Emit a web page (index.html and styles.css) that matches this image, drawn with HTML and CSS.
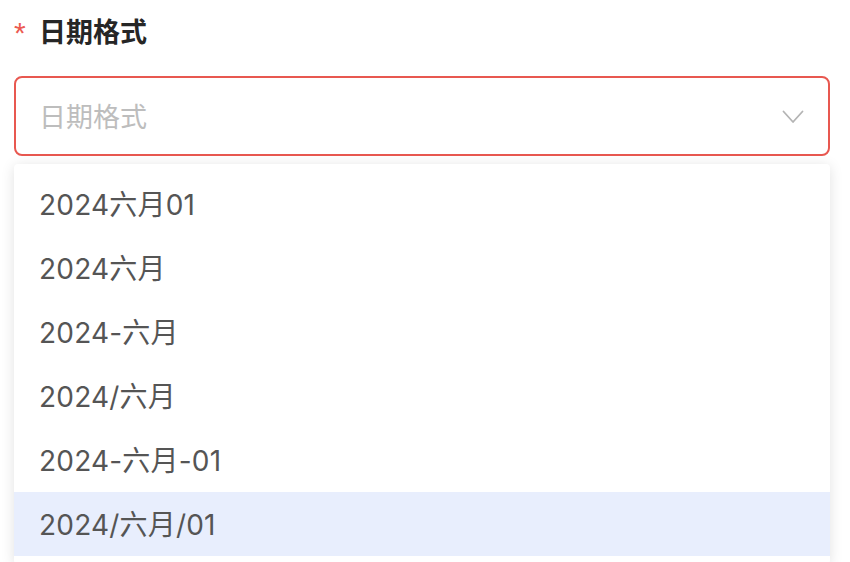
FILE: index.html
```html
<!DOCTYPE html>
<html lang="zh-CN">
<head>
<meta charset="utf-8">
<title>日期格式</title>
<link rel="stylesheet" href="styles.css">
</head>
<body>
<div class="field">
  <div class="label"><span class="star">*</span><span class="label-text">日期格式</span></div>
  <div class="select">
    <span class="placeholder">日期格式</span>
    <svg class="chevron" width="22" height="14" viewBox="0 0 22 14"><path d="M1.5 1.5 L11 12 L20.5 1.5" fill="none" stroke="#b4b4b4" stroke-width="1.8" stroke-linecap="round" stroke-linejoin="round"/></svg>
  </div>
  <ul class="dropdown">
    <li class="item">2024六月01</li>
    <li class="item">2024六月</li>
    <li class="item">2024-六月</li>
    <li class="item">2024/六月</li>
    <li class="item">2024-六月-01</li>
    <li class="item hover">2024/六月/01</li>
  </ul>
</div>
</body>
</html>
```
FILE: styles.css
```css
html, body {
  margin: 0;
  padding: 0;
  background: #ffffff;
}
body {
  font-family: Inter, "Noto Sans CJK SC", sans-serif;
  overflow: hidden;
}
.field {
  padding: 12px 20px 0 14px;
  display: flex;
  flex-direction: column;
}
.label {
  height: 36px;
  display: flex;
  align-items: center;
  font-size: 27px;
  font-weight: 700;
  color: #262626;
}
.star {
  color: #ec5a52;
  font-weight: 400;
  font-size: 30px;
  width: 25px;
  font-family: "Liberation Sans", sans-serif;
  position: relative;
  top: 3px;
}
.select {
  margin-top: 28px;
  height: 76px;
  border: 2px solid #e85850;
  border-radius: 8px;
  display: flex;
  align-items: center;
  justify-content: space-between;
  padding: 0 24px 0 23px;
}
.placeholder {
  font-size: 27px;
  color: #bdbdbd;
  font-family: "Noto Sans CJK SC", sans-serif;
  position: relative;
  top: -1px;
}
.chevron {
  display: block;
  margin-top: 2px;
}
.dropdown {
  list-style: none;
  margin: 8px 0 0 0;
  padding: 8px 0;
  background: #fff;
  border-radius: 4px;
  box-shadow: 0 2px 14px rgba(0, 0, 0, 0.12);
}
.item {
  height: 64px;
  display: flex;
  align-items: center;
  padding-left: 25px;
  font-size: 28px;
  color: #555555;
  letter-spacing: 0.2px;
  padding-bottom: 3px;
  box-sizing: border-box;
}
.item.hover {
  background: #e8eefd;
}
```
